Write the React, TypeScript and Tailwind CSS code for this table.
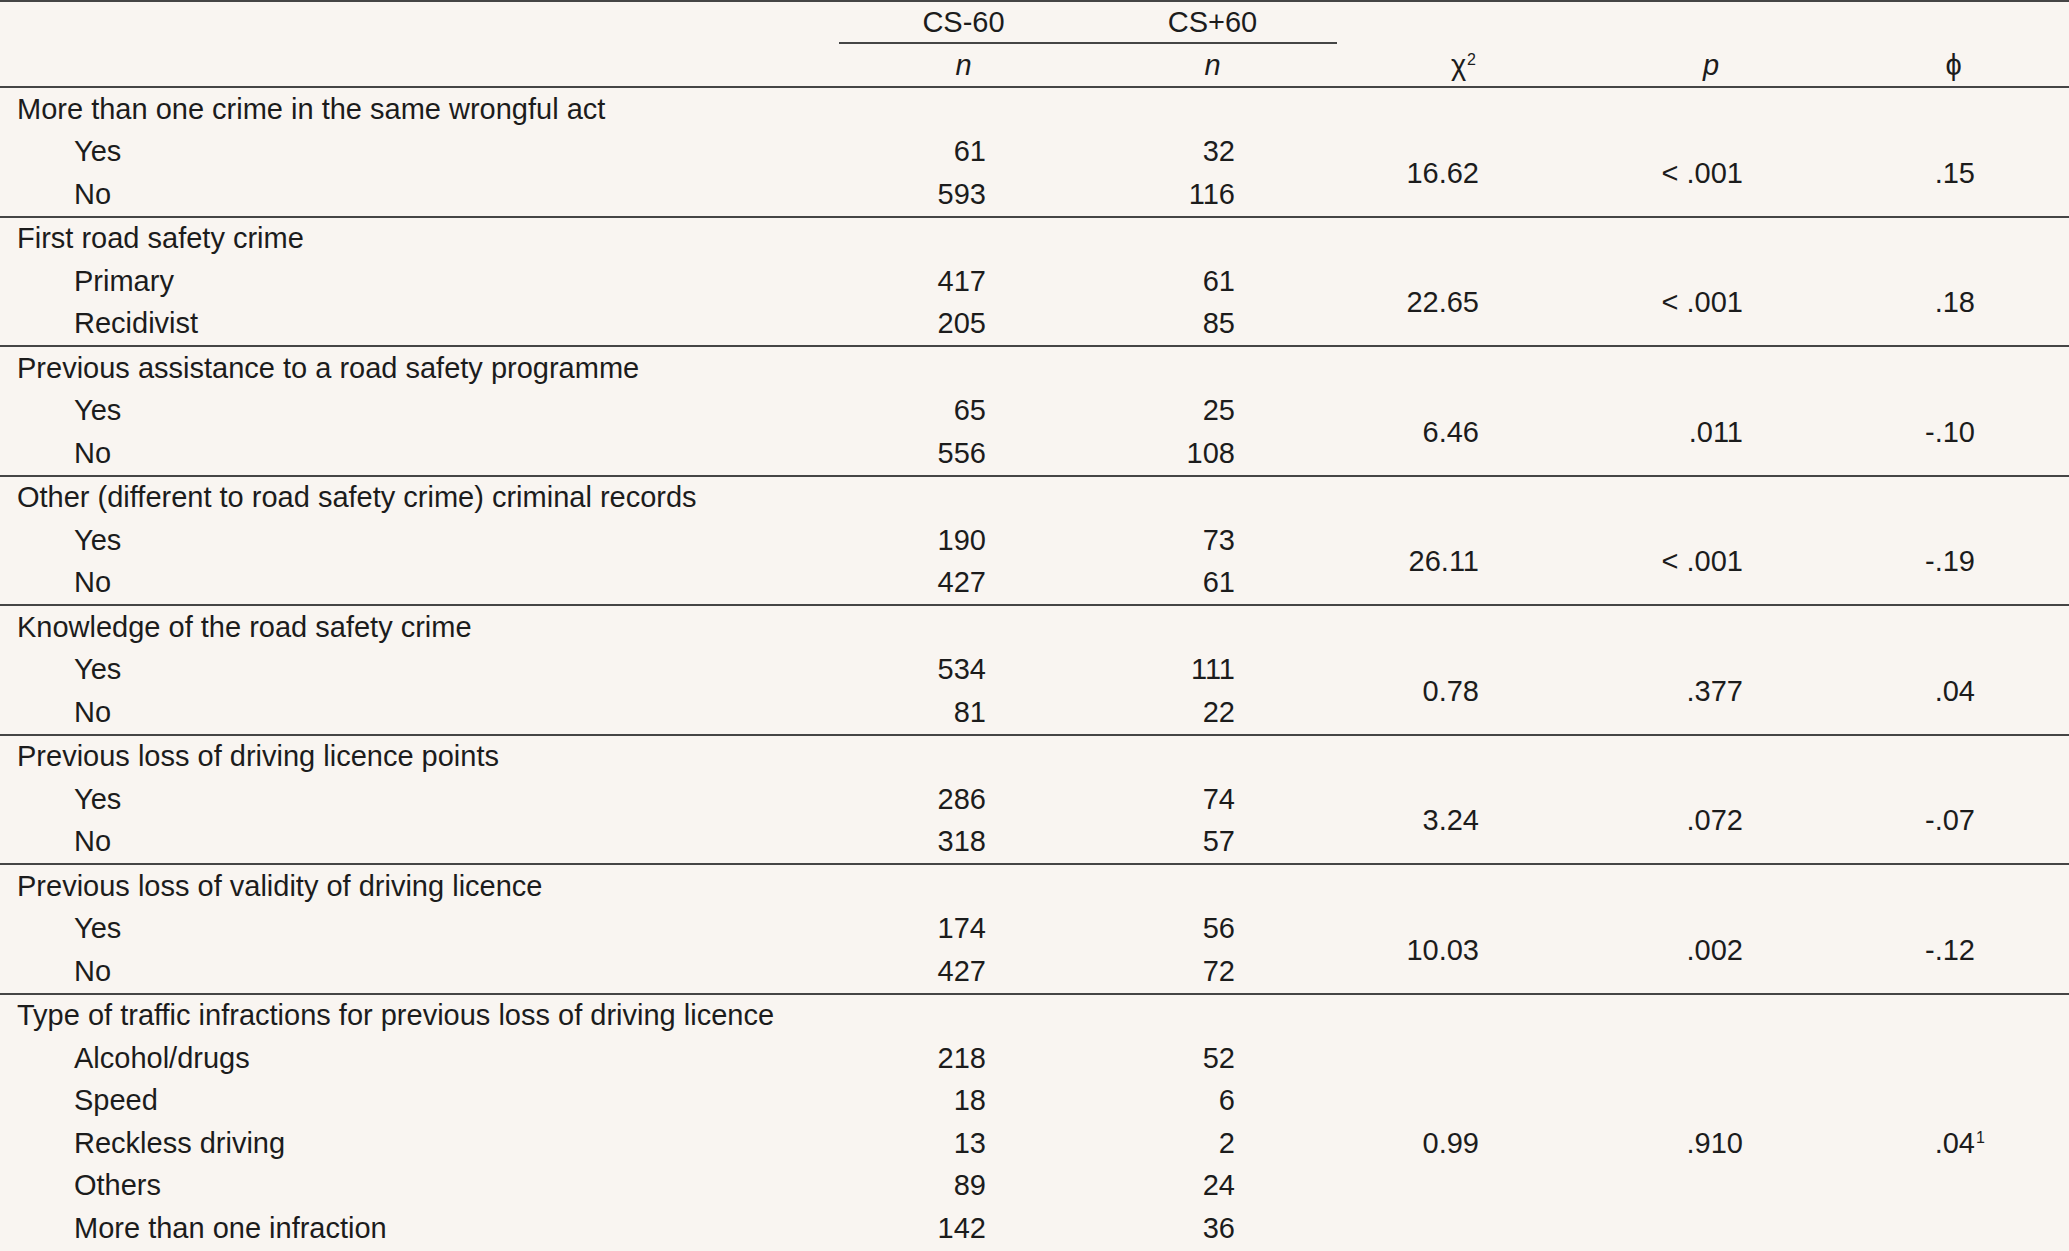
import type { ReactNode } from "react";

type Group = {
  title: string;
  rows: [string, string, string][];
  chi: string;
  p: string;
  phi: string;
  note?: string;
};

const groups: Group[] = [
  {
    title: "More than one crime in the same wrongful act",
    rows: [
      ["Yes", "61", "32"],
      ["No", "593", "116"],
    ],
    chi: "16.62",
    p: "< .001",
    phi: ".15",
  },
  {
    title: "First road safety crime",
    rows: [
      ["Primary", "417", "61"],
      ["Recidivist", "205", "85"],
    ],
    chi: "22.65",
    p: "< .001",
    phi: ".18",
  },
  {
    title: "Previous assistance to a road safety programme",
    rows: [
      ["Yes", "65", "25"],
      ["No", "556", "108"],
    ],
    chi: "6.46",
    p: ".011",
    phi: "-.10",
  },
  {
    title: "Other (different to road safety crime) criminal records",
    rows: [
      ["Yes", "190", "73"],
      ["No", "427", "61"],
    ],
    chi: "26.11",
    p: "< .001",
    phi: "-.19",
  },
  {
    title: "Knowledge of the road safety crime",
    rows: [
      ["Yes", "534", "111"],
      ["No", "81", "22"],
    ],
    chi: "0.78",
    p: ".377",
    phi: ".04",
  },
  {
    title: "Previous loss of driving licence points",
    rows: [
      ["Yes", "286", "74"],
      ["No", "318", "57"],
    ],
    chi: "3.24",
    p: ".072",
    phi: "-.07",
  },
  {
    title: "Previous loss of validity of driving licence",
    rows: [
      ["Yes", "174", "56"],
      ["No", "427", "72"],
    ],
    chi: "10.03",
    p: ".002",
    phi: "-.12",
  },
  {
    title: "Type of traffic infractions for previous loss of driving licence",
    rows: [
      ["Alcohol/drugs", "218", "52"],
      ["Speed", "18", "6"],
      ["Reckless driving", "13", "2"],
      ["Others", "89", "24"],
      ["More than one infraction", "142", "36"],
    ],
    chi: "0.99",
    p: ".910",
    phi: ".04",
    note: "1",
  },
];

const cols = "grid grid-cols-[839px_249px_249px_243px_262px_1fr]";

function Stat({ children, className }: { children: ReactNode; className: string }) {
  return <div className={`row-span-full flex items-center justify-end ${className}`}>{children}</div>;
}

function GroupBlock({ g, last }: { g: Group; last: boolean }) {
  return (
    <div className={last ? "" : "border-b-2 border-[#454545]"}>
      <div className="h-[42.5px] flex items-center pl-[17px]">{g.title}</div>
      <div className={cols} style={{ gridTemplateRows: `repeat(${g.rows.length}, 42.5px)` }}>
        {g.rows.map(([label, a, b], i) => (
          <div key={label + i} className="contents">
            <div className="col-start-1 flex items-center pl-[74px]" style={{ gridRow: i + 1 }}>
              {label}
            </div>
            <div className="col-start-2 flex items-center justify-end pr-[102px]" style={{ gridRow: i + 1 }}>
              {a}
            </div>
            <div className="col-start-3 flex items-center justify-end pr-[102px]" style={{ gridRow: i + 1 }}>
              {b}
            </div>
          </div>
        ))}
        <Stat className="col-start-4 pr-[101px]">{g.chi}</Stat>
        <Stat className="col-start-5 pr-[99px]">{g.p}</Stat>
        <Stat className="col-start-6 pr-[94px]">
          <span className="relative">
            {g.phi}
            {g.note && <span className="absolute left-full top-[1px] pl-[1px] text-[16px]">{g.note}</span>}
          </span>
        </Stat>
      </div>
    </div>
  );
}

export default function App() {
  return (
    <div className="w-[2069px] h-[1251px] overflow-hidden bg-[#f9f5f1] text-[#1c1c1c] font-['Liberation_Sans',Arial,sans-serif] text-[29px] leading-none border-t-2 border-[#454545]">
      {/* Header */}
      <div className={`${cols} grid-rows-[42px_42px] border-b-2 border-[#454545]`}>
        <div className="row-span-2" />
        <div className="col-span-2 grid grid-cols-2 border-b-2 border-[#454545]">
          <div className="flex items-center justify-center">CS-60</div>
          <div className="flex items-center justify-center">CS+60</div>
        </div>
        <div className="col-start-4 row-span-2 flex items-end justify-center pb-[6px]">
          <span className="relative">
            χ<span className="absolute left-full top-[1px] pl-[1px] text-[16px]">2</span>
          </span>
        </div>
        <div className="col-start-5 row-span-2 flex items-end justify-center pb-[6px] italic">p</div>
        <div className="col-start-6 row-span-2 flex items-end justify-center pb-[6px] pr-[4px]">ϕ</div>
        <div className="col-start-2 row-start-2 flex items-center justify-center italic">n</div>
        <div className="col-start-3 row-start-2 flex items-center justify-center italic">n</div>
      </div>

      {groups.map((g, i) => (
        <GroupBlock key={g.title} g={g} last={i === groups.length - 1} />
      ))}
    </div>
  );
}
